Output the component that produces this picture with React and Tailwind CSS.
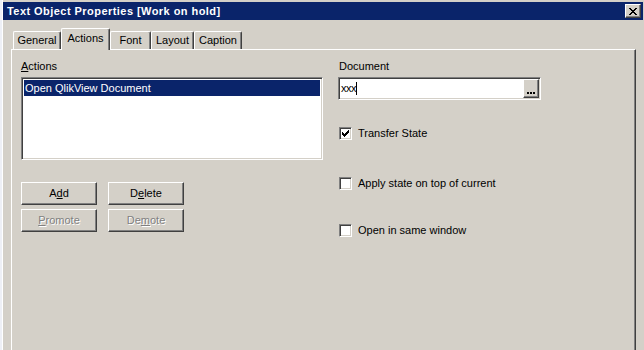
import React from 'react';

const raised =
  'border border-t-white border-l-white border-r-[#404040] border-b-[#404040] shadow-[inset_-1px_-1px_0_#808080,inset_1px_1px_0_#d4d0c8]';
const sunken =
  'border border-t-[#808080] border-l-[#808080] border-r-white border-b-white shadow-[inset_1px_1px_0_#404040,inset_-1px_-1px_0_#d4d0c8]';

function Btn({ children, disabled }) {
  return (
    <div
      className={`${raised} w-[76px] h-[23px] bg-[#d4d0c8] flex items-center justify-center ${
        disabled ? 'text-[#808080] [text-shadow:1px_1px_0_#fff]' : 'text-black'
      }`}
    >
      {children}
    </div>
  );
}

function Check({ checked, label, className = '' }) {
  return (
    <div className={`flex items-center h-[13px] ${className}`}>
      <div className={`${sunken} w-[13px] h-[13px] bg-white flex items-center justify-center`}>
        {checked && (
          <svg width="7" height="7" viewBox="0 0 7 7" shapeRendering="crispEdges">
            <path d="M0 2h1v3H0zM1 3h1v3H1zM2 4h1v3H2zM3 3h1v3H3zM4 2h1v3H4zM5 1h1v3H5zM6 0h1v3H6z" fill="#000" />
          </svg>
        )}
      </div>
      <span className="ml-[6px] leading-[13px]">{label}</span>
    </div>
  );
}

const tabs = [
  { name: 'General', w: 'w-[48px]' },
  { name: 'Actions', w: 'w-[49px]', active: true },
  { name: 'Font', w: 'w-[41px]' },
  { name: 'Layout', w: 'w-[43px]' },
  { name: 'Caption', w: 'w-[48px]' },
];

export default function App() {
  return (
    <div
      className="w-[644px] h-[350px] overflow-hidden bg-[#eef0f6] flex text-[11px] text-black"
      style={{ fontFamily: '"Liberation Sans", Arial, sans-serif' }}
    >
      {/* window */}
      <div className="ml-[2px] flex-1 flex flex-col bg-[#d4d0c8] border-l border-l-white pt-[1px] pr-[1px]">
        {/* title bar */}
        <div className="h-[18px] mt-[1px] bg-[#0a246a] flex items-center pl-[4px] pr-[2px]">
          <span className="font-bold text-white text-[11px] tracking-[0.45px]">Text Object Properties [Work on hold]</span>
          <div className={`${raised} ml-auto w-[16px] h-[14px] bg-[#d4d0c8] flex items-center justify-center`}>
            <svg width="8" height="7" viewBox="0 0 8 7" shapeRendering="crispEdges">
              <path d="M0 0h2v1H0zM6 0h2v1H6zM1 1h2v1H1zM5 1h2v1H5zM2 2h4v1H2zM3 3h2v1H3zM2 4h4v1H2zM1 5h2v1H1zM5 5h2v1H5zM0 6h2v1H0zM6 6h2v1H6z" fill="#000" />
            </svg>
          </div>
        </div>

        {/* tab strip */}
        <div className="mt-[8px] ml-[8px] flex items-end h-[21px] relative z-10">
          <div className="w-[2px]" />
          {tabs.map((t) => (
            <div
              key={t.name}
              className={`${t.w} ${
                t.active ? 'h-[22px] -mb-[1px] bg-[#d4d0c8] z-10 pb-[2px]' : 'h-[18px]'
              } border-t border-l border-r border-t-white border-l-white border-r-[#404040] rounded-t-[2px] shadow-[inset_-1px_0_0_#808080] flex items-center justify-center whitespace-nowrap`}
            >
              {t.name}
            </div>
          ))}
        </div>

        {/* panel */}
        <div className="ml-[8px] mr-[7px] flex-1 border-t border-l border-r border-t-white border-l-white border-r-[#404040] shadow-[inset_-1px_0_0_#808080] flex pl-[9px] pt-[10px]">
          {/* left column */}
          <div className="w-[302px] flex flex-col">
            <div className="h-[13px] leading-[13px]">
              <span className="underline">A</span>ctions
            </div>
            <div className={`${sunken} mt-[4px] h-[83px] bg-white p-[2px]`}>
              <div className="h-[16px] bg-[#0a246a] text-white flex items-center pl-[1px]">Open QlikView Document</div>
            </div>
            <div className="mt-[22px] flex gap-[11px]">
              <Btn>
                A<span className="underline">d</span>d
              </Btn>
              <Btn>
                D<span className="underline">e</span>lete
              </Btn>
            </div>
            <div className="mt-[4px] flex gap-[11px]">
              <Btn disabled>
                <span className="underline">P</span>romote
              </Btn>
              <Btn disabled>
                De<span className="underline">m</span>ote
              </Btn>
            </div>
          </div>

          {/* right column */}
          <div className="ml-[15px] w-[203px] flex flex-col">
            <div className="h-[13px] leading-[13px] pl-[1px]">Document</div>
            <div className={`${sunken} mt-[4px] h-[23px] bg-white flex items-center pl-[2px] pr-[1px]`}>
              <span className="tracking-[-0.5px]">xxx</span>
              <span className="w-[1px] h-[13px] bg-black" />
              <div className={`${raised} ml-auto w-[16px] h-[19px] bg-[#d4d0c8] flex items-end justify-center pb-[3px]`}>
                <svg width="8" height="2" viewBox="0 0 8 2" shapeRendering="crispEdges">
                  <path d="M0 0h2v2H0zM3 0h2v2H3zM6 0h2v2H6z" fill="#000" />
                </svg>
              </div>
            </div>
            <Check checked label="Transfer State" className="mt-[27px] ml-[1px]" />
            <Check label="Apply state on top of current" className="mt-[37px] ml-[1px]" />
            <Check label="Open in same window" className="mt-[34px] ml-[1px]" />
          </div>
        </div>
      </div>
    </div>
  );
}
